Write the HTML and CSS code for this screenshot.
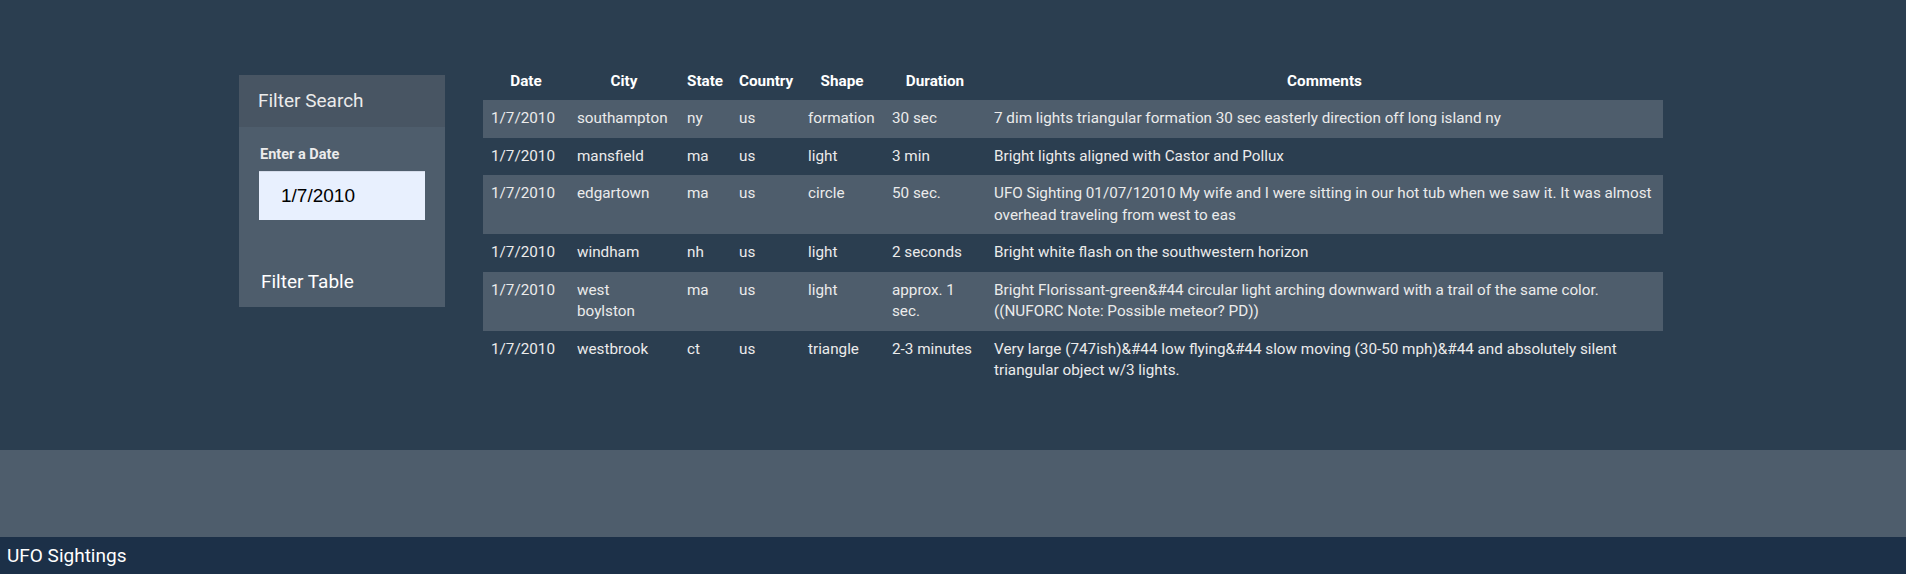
FILE: index.html
```html
<!DOCTYPE html>
<html lang="en">
<head>
<meta charset="utf-8">
<title>UFO Sightings</title>
<link rel="stylesheet" href="styles.css">
</head>
<body>
<main class="main">
  <aside class="panel">
    <div class="panel-heading">Filter Search</div>
    <div class="panel-body">
      <label class="date-label" for="datetime">Enter a Date</label>
      <input class="date-input" id="datetime" type="text" value="1/7/2010">
      <button class="filter-btn" type="button">Filter Table</button>
    </div>
  </aside>
  <table class="ufo-table">
    <colgroup>
      <col class="c-date"><col class="c-city"><col class="c-state"><col class="c-country"><col class="c-shape"><col class="c-duration"><col class="c-comments">
    </colgroup>
    <thead>
      <tr>
        <th>Date</th>
        <th>City</th>
        <th>State</th>
        <th>Country</th>
        <th>Shape</th>
        <th>Duration</th>
        <th>Comments</th>
      </tr>
    </thead>
    <tbody>
      <tr class="odd">
        <td>1/7/2010</td><td class="city">southampton</td><td>ny</td><td>us</td><td>formation</td><td class="dur">30 sec</td>
        <td>7 dim lights triangular formation 30 sec easterly direction off long island ny</td>
      </tr>
      <tr>
        <td>1/7/2010</td><td class="city">mansfield</td><td>ma</td><td>us</td><td>light</td><td class="dur">3 min</td>
        <td>Bright lights aligned with Castor and Pollux</td>
      </tr>
      <tr class="odd">
        <td>1/7/2010</td><td class="city">edgartown</td><td>ma</td><td>us</td><td>circle</td><td class="dur">50 sec.</td>
        <td>UFO Sighting 01/07/12010 My wife and I were sitting in our hot tub when we saw it. It was almost overhead traveling from west to eas</td>
      </tr>
      <tr>
        <td>1/7/2010</td><td class="city">windham</td><td>nh</td><td>us</td><td>light</td><td class="dur">2 seconds</td>
        <td>Bright white flash on the southwestern horizon</td>
      </tr>
      <tr class="odd">
        <td>1/7/2010</td><td class="city">west boylston</td><td>ma</td><td>us</td><td>light</td><td class="dur">approx. 1 sec.</td>
        <td>Bright Florissant-green&amp;#44 circular light arching downward with a trail of the same color. ((NUFORC Note: Possible meteor? PD))</td>
      </tr>
      <tr>
        <td>1/7/2010</td><td class="city">westbrook</td><td>ct</td><td>us</td><td>triangle</td><td class="dur">2-3 minutes</td>
        <td>Very large (747ish)&amp;#44 low flying&amp;#44 slow moving (30-50 mph)&amp;#44 and absolutely silent triangular object w/3 lights.</td>
      </tr>
    </tbody>
  </table>
</main>
<section class="band"></section>
<footer class="footer">UFO Sightings</footer>
</body>
</html>
```
FILE: styles.css
```css
html, body {
  margin: 0;
  padding: 0;
}

body {
  background: #2b3e50;
  color: #ebebeb;
  font-family: Roboto, Lato, sans-serif;
  font-size: 15.25px;
  line-height: 21.43px;
  overflow: hidden;
}

.main {
  height: 450px;
  box-sizing: border-box;
  display: flex;
  align-items: flex-start;
  gap: 38px;
  padding: 63px 0 0 239px;
}

/* ---------- filter panel ---------- */
.panel {
  width: 206px;
  margin-top: 12px;
  background: #4e5d6c;
  flex: none;
}

.panel-heading {
  height: 52px;
  box-sizing: border-box;
  padding: 0 19px;
  background: #485563;
  color: #ebebeb;
  font-size: 19px;
  line-height: 52px;
}

.panel-body {
  display: flex;
  flex-direction: column;
  align-items: flex-start;
  padding: 18px 20px 12px;
}

.date-label {
  font-size: 14.5px;
  font-weight: 700;
  line-height: 20px;
  padding-left: 1px;
  margin-bottom: 6px;
  color: #ebebeb;
}

.date-input {
  width: 166px;
  height: 49px;
  box-sizing: border-box;
  border: none;
  border-top: 1px solid #d5dcea;
  padding: 0 0 0 22px;
  background: #e8f0fe;
  color: #000;
  font-family: "Liberation Sans", Arial, sans-serif;
  font-size: 19px;
  outline: none;
}

.filter-btn {
  margin-top: 48px;
  padding: 0 2px;
  border: none;
  background: transparent;
  color: #ffffff;
  font-family: Roboto, Lato, sans-serif;
  font-size: 19px;
  line-height: 27px;
  cursor: pointer;
}

/* ---------- table ---------- */
.ufo-table {
  width: 1180px;
  flex: none;
  table-layout: fixed;
  border-collapse: collapse;
  border-spacing: 0;
}

.c-date { width: 86px; }
.c-city { width: 110px; }
.c-state { width: 52px; }
.c-country { width: 69px; }
.c-shape { width: 84px; }
.c-duration { width: 102px; }
.c-comments { width: 677px; }

.ufo-table th {
  padding: 8px;
  text-align: center;
  font-weight: 700;
  color: #ffffff;
  vertical-align: top;
}

.ufo-table td {
  padding: 8px;
  text-align: left;
  vertical-align: top;
  color: #ebebeb;
}

.ufo-table td.city { padding-right: 16px; }
.ufo-table td.dur { padding-right: 6px; }

.ufo-table tr.odd td {
  background: #4e5d6c;
}

/* ---------- bottom ---------- */
.band {
  height: 87px;
  background: #4e5d6c;
}

.footer {
  height: 40px;
  box-sizing: border-box;
  padding: 5px 0 0 7px;
  background: #1c3048;
  color: #ffffff;
  font-size: 19px;
  line-height: 27px;
}
```
